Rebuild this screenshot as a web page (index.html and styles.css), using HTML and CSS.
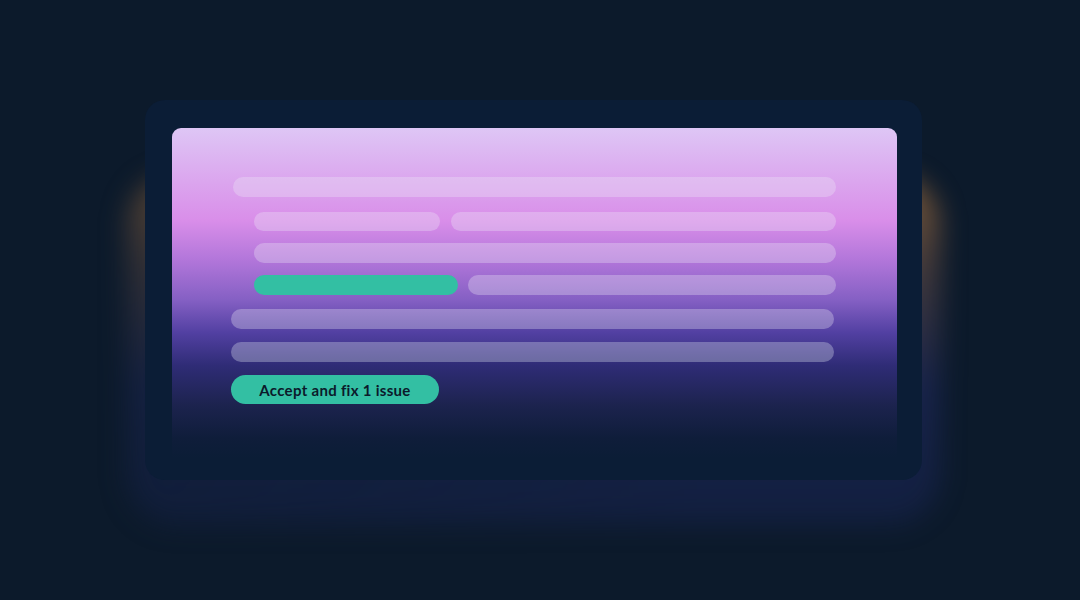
FILE: index.html
```html
<!DOCTYPE html>
<html>
<head>
<meta charset="utf-8">
<link rel="stylesheet" href="styles.css">
</head>
<body>
<div class="stage">
  <div class="scene">
    <div class="glow"></div>
    <div class="card">
      <div class="panel">
        <div class="bar row1"></div>
        <div class="row row2">
          <div class="bar b-short"></div>
          <div class="bar grow"></div>
        </div>
        <div class="bar row3"></div>
        <div class="row row4">
          <div class="bar green"></div>
          <div class="bar grow"></div>
        </div>
        <div class="bar row5"></div>
        <div class="bar row6"></div>
        <button class="btn">Accept and fix 1 issue</button>
      </div>
    </div>
  </div>
</div>
</body>
</html>
```

FILE: styles.css
```css
html, body {
  margin: 0;
  padding: 0;
  width: 1080px;
  height: 600px;
  overflow: hidden;
  background: #0c1a2b;
}

.stage {
  padding: 100px 0 0 145px;
}

.scene {
  position: relative;
  width: 777px;
  height: 380px;
}

.glow {
  position: absolute;
  left: -18px;
  top: 75px;
  width: 813px;
  height: 350px;
  border-radius: 50px;
  background:
    linear-gradient(to right,
      rgba(12, 26, 43, 0.35) 0%,
      rgba(12, 26, 43, 0.15) 40%,
      rgba(12, 26, 43, 0) 70%),
    linear-gradient(to bottom,
      rgba(195, 128, 60, 0.6) 0%,
      rgba(150, 105, 80, 0.42) 25%,
      rgba(50, 55, 140, 0.33) 60%,
      rgba(35, 45, 120, 0.26) 100%);
  filter: blur(13px);
}

.card {
  position: relative;
  width: 777px;
  height: 380px;
  box-sizing: border-box;
  background: #0b1d36;
  border-radius: 20px;
  padding: 28px 25px 0 27px;
}

.panel {
  height: 330px;
  border-radius: 9px 9px 0 0;
  box-sizing: border-box;
  padding: 49px 63px 0 59px;
  background: linear-gradient(to bottom,
    #dec6f5 0%,
    #d98ee9 28%,
    #b276da 40%,
    #8560c4 52%,
    #5240a2 62%,
    #2f2c76 72%,
    #1c234e 84%,
    #0f1d3a 94%,
    #0b1d36 100%);
}

.bar {
  height: 20px;
  border-radius: 10px;
  background: rgba(235, 232, 245, 0.32);
}

.row {
  display: flex;
}

.row1 {
  margin-left: 2px;
  width: 603px;
}

.row2 {
  margin-top: 15px;
  margin-left: 23px;
  width: 582px;
  gap: 11px;
}
.row2 .bar { height: 19px; }

.b-short {
  width: 186px;
  flex: none;
}

.grow {
  flex: 1;
}

.row3 {
  margin-top: 12px;
  margin-left: 23px;
  width: 582px;
}

.row4 {
  margin-top: 12px;
  margin-left: 23px;
  width: 582px;
  gap: 10px;
}

.green {
  width: 204px;
  flex: none;
  background: #33bfa3;
}

.row5 {
  margin-top: 14px;
  width: 603px;
}

.row6 {
  margin-top: 13px;
  width: 603px;
  background: rgba(215, 220, 235, 0.35);
}

.btn {
  display: block;
  margin-top: 13px;
  width: 208px;
  height: 29px;
  border: none;
  border-radius: 15px;
  background: #33bfa3;
  color: #0b1a2b;
  font-family: "Lato", "Noto Sans", sans-serif;
  font-weight: 700;
  font-size: 15px;
  letter-spacing: 0.3px;
  padding: 0;
  text-align: center;
}
```
